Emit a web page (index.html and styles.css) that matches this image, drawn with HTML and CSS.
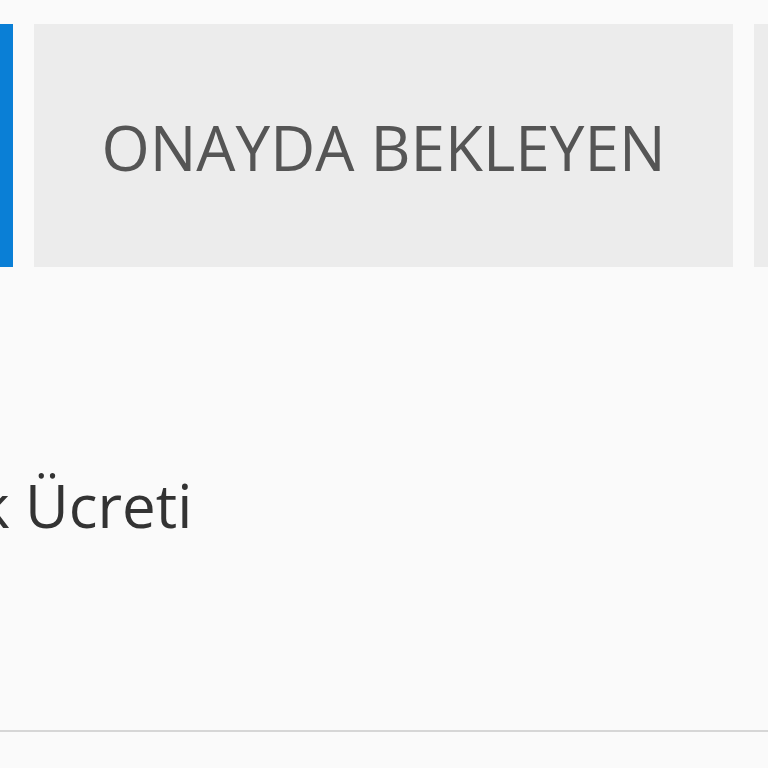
FILE: index.html
```html
<!DOCTYPE html>
<html lang="tr">
<head>
  <meta charset="UTF-8">
  <meta name="viewport" content="width=device-width, initial-scale=1.0">
  <title>Ödemeler</title>
  <link rel="stylesheet" href="styles.css">
</head>
<body>
  <div class="page">
    <div class="tabs">
      <div class="tab active"></div>
      <div class="tab">ONAYDA BEKLEYEN</div>
      <div class="tab"></div>
    </div>
    <div class="row">
      <span class="label">k Ücreti</span>
    </div>
  </div>
</body>
</html>
```

FILE: styles.css
```css
body {
  margin: 0;
  padding: 0;
  background: #fafafa;
  font-family: 'Open Sans', 'Noto Sans', sans-serif;
  overflow: hidden;
}
.page {
  width: 768px;
  height: 768px;
  overflow: hidden;
}
.tabs {
  display: flex;
  gap: 21px;
  margin-top: 24px;
  margin-left: -187px;
}
.tab {
  flex: none;
  width: 699px;
  height: 243px;
  background: #ececec;
  color: #555;
  font-size: 62px;
  display: flex;
  align-items: center;
  justify-content: center;
  padding-top: 3px;
  box-sizing: border-box;
}
.tab.active {
  width: 200px;
  background: #0a7fd6;
}
.row {
  height: 463px;
  border-bottom: 2px solid #d6d6d6;
  display: flex;
  align-items: center;
}
.label {
  margin-left: -22px;
  margin-top: 12px;
  font-size: 60px;
  color: #333;
}
```
